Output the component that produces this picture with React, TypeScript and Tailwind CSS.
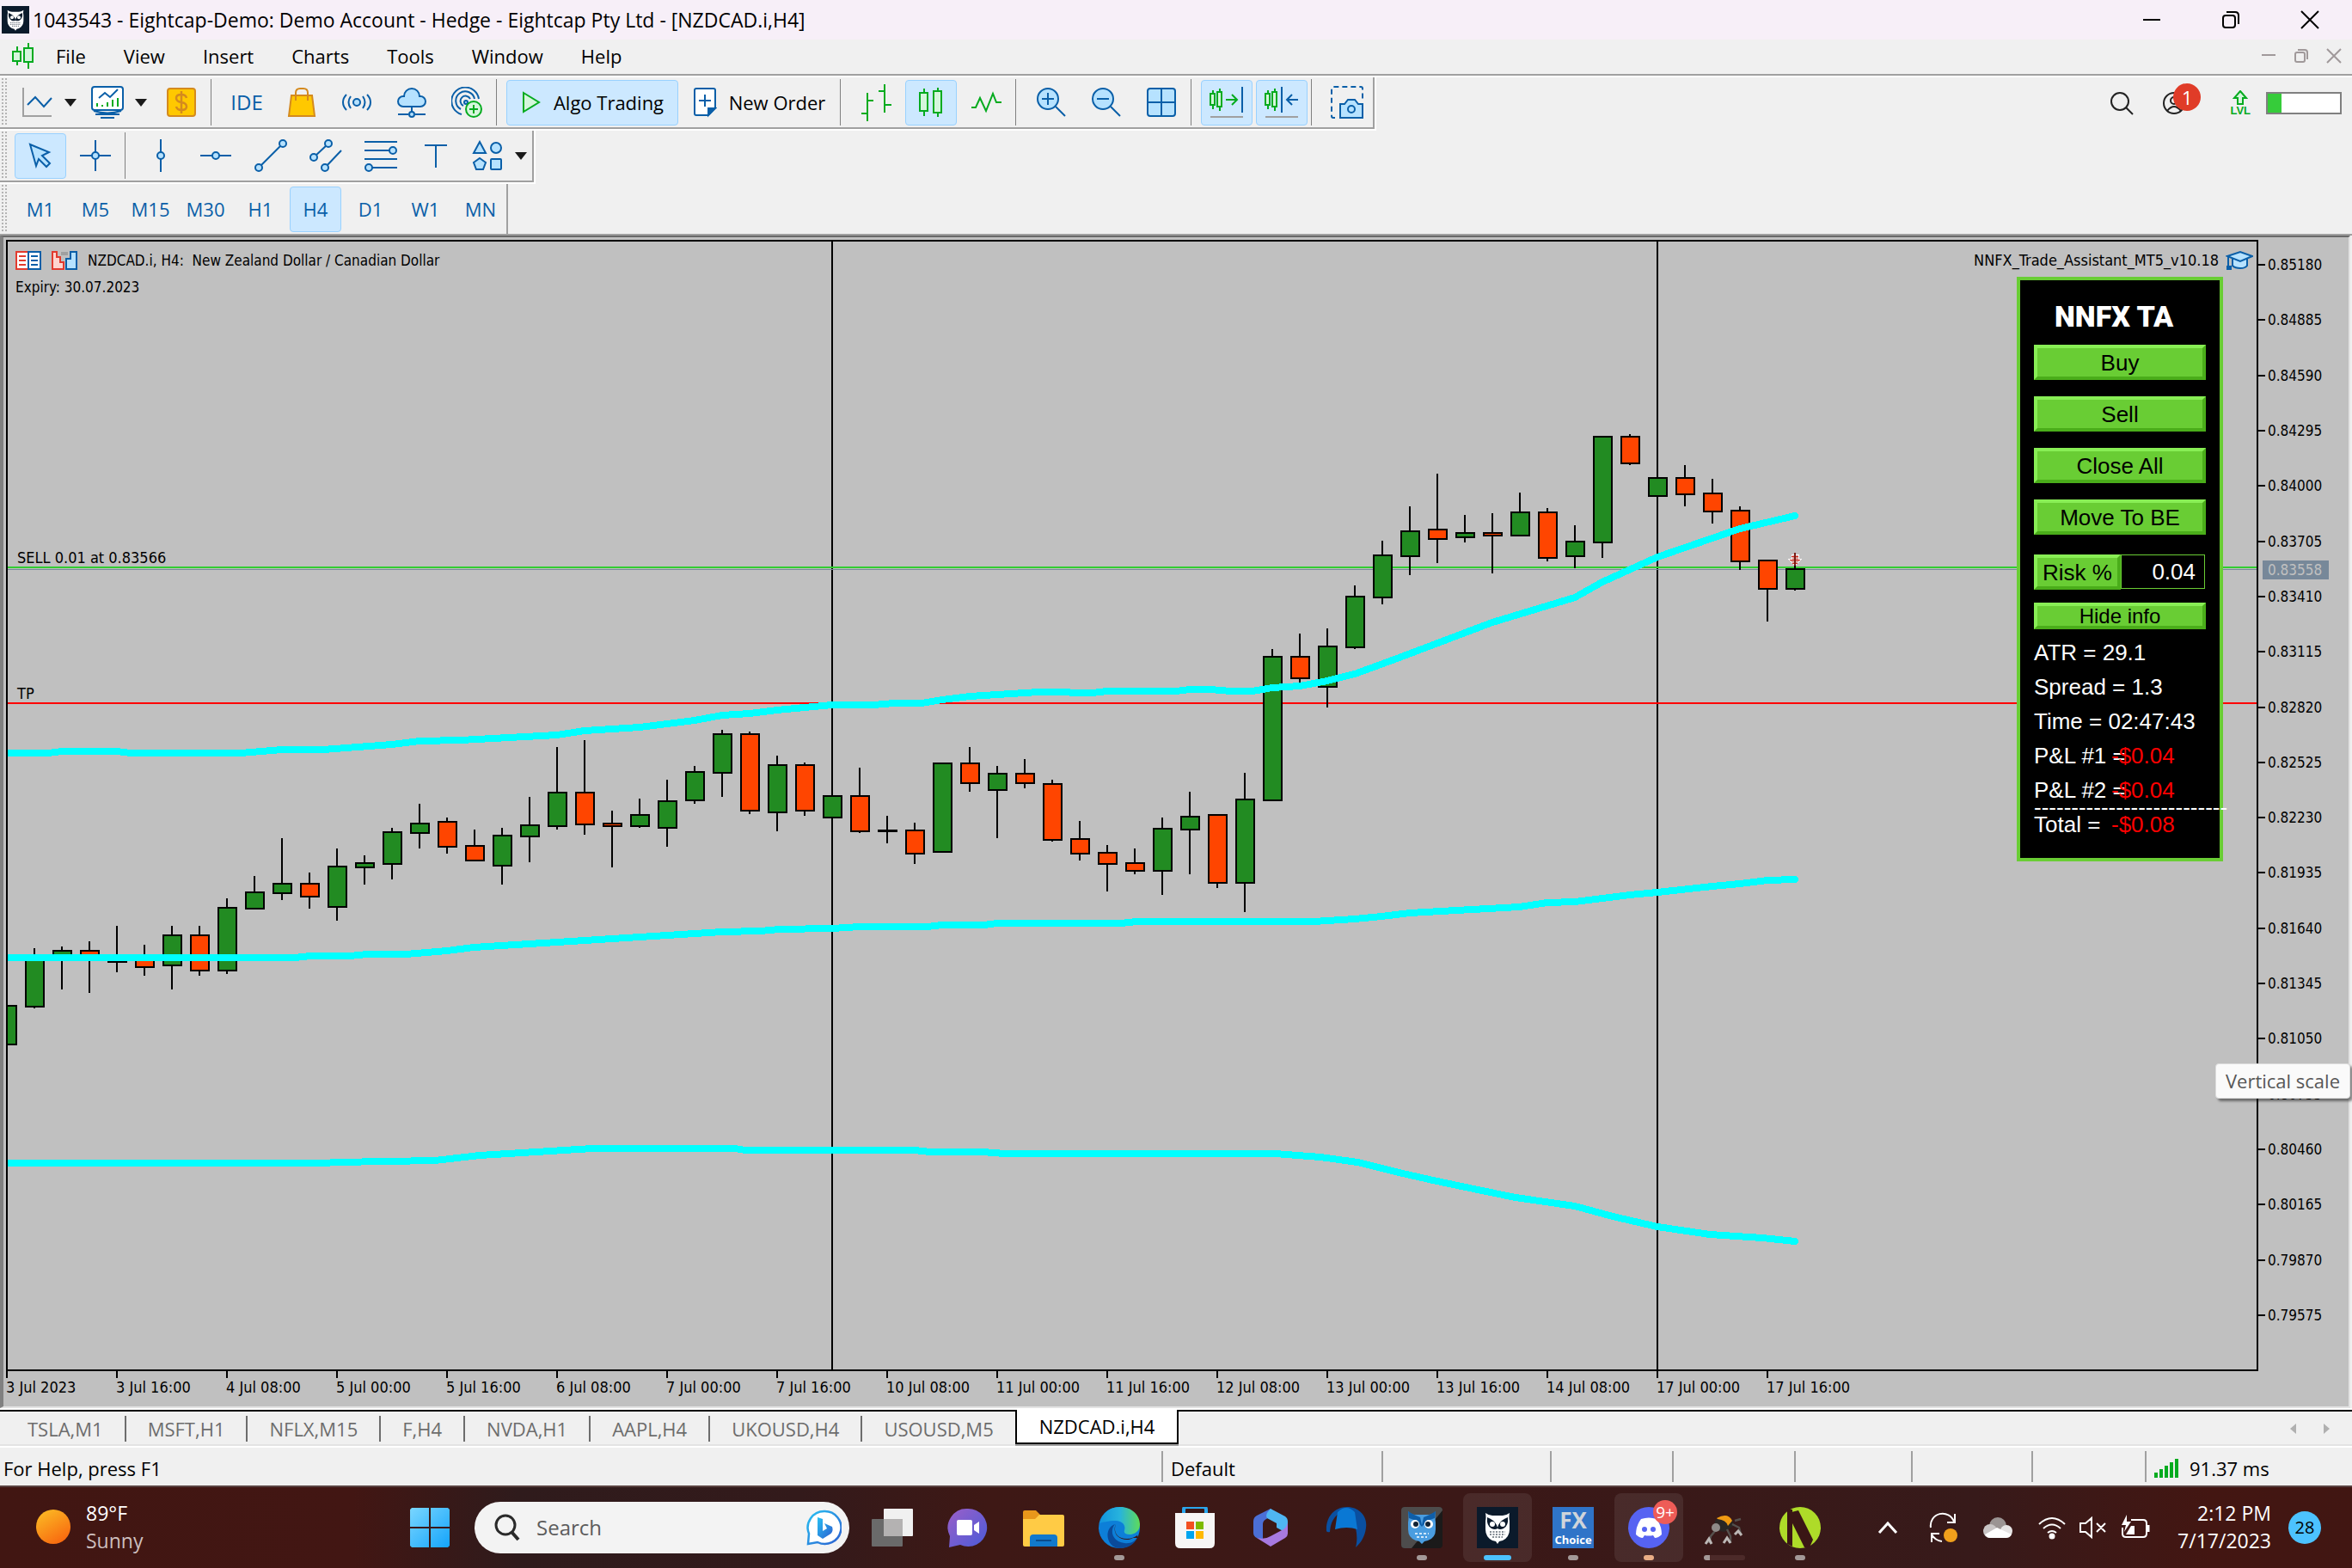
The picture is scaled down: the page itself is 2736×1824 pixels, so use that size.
import type { ReactNode } from 'react'
import { clsx } from 'clsx'

const BLUE = '#0a5fa8'
const SKY = '#b6e2ff'
const GREEN = '#05ab1f'
const MINT = '#d5f6dc'

/* ---------- chart data ---------- */

// [high, body top, body bottom, low, bullish]
type Candle = [number, number, number, number, 0 | 1]

const CANDLES: Candle[] = [
    [1169, 1169, 1216, 1216, 1], [1103, 1111, 1172, 1173, 1], [1101, 1105, 1115, 1151, 1],
    [1095, 1105, 1115, 1155, 0], [1077, 1114, 1120, 1131, 1], [1099, 1113, 1126, 1135, 0],
    [1077, 1087, 1124, 1151, 1], [1077, 1087, 1130, 1135, 0], [1045, 1055, 1130, 1133, 1],
    [1019, 1037, 1058, 1058, 1], [975, 1027, 1040, 1047, 1], [1015, 1027, 1044, 1057, 0],
    [987, 1007, 1056, 1071, 1], [995, 1003, 1010, 1029, 1], [963, 967, 1006, 1023, 1],
    [935, 957, 970, 987, 1], [951, 955, 986, 993, 0], [965, 983, 1002, 1002, 0],
    [963, 971, 1008, 1029, 1], [927, 959, 974, 1003, 1], [869, 921, 962, 965, 1],
    [861, 921, 960, 971, 0], [943, 957, 962, 1009, 0], [929, 947, 962, 963, 1],
    [907, 931, 964, 985, 1], [891, 897, 932, 935, 1], [849, 853, 900, 927, 1],
    [851, 853, 944, 947, 0], [879, 889, 946, 967, 1], [887, 889, 944, 949, 0],
    [925, 925, 952, 952, 1], [893, 925, 968, 969, 0], [949, 965, 968, 981, 1],
    [957, 965, 994, 1005, 0], [887, 887, 992, 992, 1], [869, 887, 912, 921, 0],
    [891, 899, 920, 975, 1], [883, 899, 912, 917, 0], [907, 911, 978, 979, 0],
    [955, 975, 994, 1001, 0], [983, 991, 1006, 1037, 0], [987, 1003, 1014, 1017, 0],
    [951, 963, 1014, 1041, 1], [921, 949, 966, 1017, 1], [947, 947, 1028, 1033, 0],
    [899, 929, 1028, 1061, 1], [755, 763, 932, 932, 1], [737, 763, 790, 797, 0],
    [731, 751, 800, 823, 1], [681, 693, 754, 755, 1], [629, 645, 696, 703, 1],
    [589, 617, 648, 669, 1], [551, 615, 628, 655, 0], [599, 619, 626, 631, 1],
    [597, 619, 624, 667, 0], [573, 595, 624, 624, 1], [591, 595, 650, 653, 0],
    [611, 629, 648, 661, 1], [507, 507, 632, 649, 1], [505, 507, 540, 541, 0],
    [555, 555, 578, 578, 1], [541, 555, 576, 589, 0], [557, 573, 596, 609, 0],
    [589, 593, 654, 663, 0], [651, 651, 686, 723, 0], [643, 661, 686, 687, 1],
]

const BANDS = [
    '8,876 56,876 72,874 136,874 152,876 280,876 328,872 376,872 456,866 488,862 536,861 648,855 680,850 744,846 808,838 840,832 872,830 904,826 968,820 1016,820 1040,818 1072,818 1096,814 1128,810 1192,806 1208,805 1239,805 1250,806 1271,806 1288,804 1368,804 1384,802 1408,802 1432,804 1457,804 1480,800 1512,798 1544,792 1576,784 1625,766 1736,724 1832,695 1864,677 1928,648 1960,637 2024,615 2088,600',
    '8,1114 343,1114 361,1112 407,1112 427,1110 472,1110 520,1106 551,1102 648,1096 744,1090 840,1084 885,1083 906,1081 968,1080 1000,1078 1079,1078 1096,1076 1145,1076 1160,1074 1304,1074 1322,1072 1528,1072 1576,1069 1607,1066 1640,1062 1767,1055 1800,1050 1832,1049 1896,1041 1928,1038 1992,1031 2024,1028 2056,1024 2088,1023',
    '8,1353 375,1353 393,1352 506,1350 558,1344 640,1339 689,1336 855,1336 867,1338 1064,1338 1082,1340 1143,1340 1169,1342 1483,1342 1536,1346 1579,1352 1623,1363 1667,1373 1719,1384 1763,1393 1832,1403 1876,1415 1928,1427 1989,1436 2050,1440 2088,1444',
]

const PRICES = Array.from({ length: 20 }, (_, i) => ((85180 - i * 295) / 100000).toFixed(5))

const TIMES = [
    '3 Jul 2023', '3 Jul 16:00', '4 Jul 08:00', '5 Jul 00:00', '5 Jul 16:00', '6 Jul 08:00',
    '7 Jul 00:00', '7 Jul 16:00', '10 Jul 08:00', '11 Jul 00:00', '11 Jul 16:00', '12 Jul 08:00',
    '13 Jul 00:00', '13 Jul 16:00', '14 Jul 08:00', '17 Jul 00:00', '17 Jul 16:00',
]

const MENUS = ['File', 'View', 'Insert', 'Charts', 'Tools', 'Window', 'Help']
const TIMEFRAMES = ['M1', 'M5', 'M15', 'M30', 'H1', 'H4', 'D1', 'W1', 'MN']
const TABS = ['TSLA,M1', 'MSFT,H1', 'NFLX,M15', 'F,H4', 'NVDA,H1', 'AAPL,H4', 'UKOUSD,H4', 'USOUSD,M5']

/* ---------- small building blocks ---------- */

type IconProps = { w?: number; h?: number; children: ReactNode; stroke?: string; fill?: string; sw?: number }

const Icon = ({ w = 36, h = 36, children, stroke = BLUE, fill = 'none', sw = 2 }: IconProps) => (
    <svg width={w} height={h} viewBox={`0 0 ${w} ${h}`} fill={fill} stroke={stroke} strokeWidth={sw} className="shrink-0" aria-hidden="true">
        {children}
    </svg>
)

const ToolButton = ({ label, active, children }: { label: string; active?: boolean; children: ReactNode }) => (
    <button
        aria-label={label}
        className={clsx(
            'flex h-[53px] w-[60px] shrink-0 items-center justify-center rounded-sm border text-[#0a5fa8]',
            active ? 'border-[#99d1ff] bg-[#cce8ff]' : 'border-transparent',
        )}
    >
        {children}
    </button>
)

const Drop = ({ label }: { label: string }) => (
    <button aria-label={label} className="-ml-1 flex h-[53px] w-[18px] shrink-0 items-center justify-center">
        <svg width="14" height="9" viewBox="0 0 14 9" fill="#1a1a1a" aria-hidden="true"><path d="M0 0h14L7 9z" /></svg>
    </button>
)

const Sep = () => <span className="mr-[7px] h-[54px] w-px shrink-0 bg-[#808080]" />

const Grip = () => (
    <svg width="7" height="56" className="ml-[2px] shrink-0" aria-hidden="true">
        {Array.from({ length: 14 }, (_, i) => (
            <path key={i} d={`M0 ${i * 4 + 1}h2M4 ${i * 4 + 1}h2`} stroke="#b4b4b4" strokeWidth="2" />
        ))}
    </svg>
)

/* ---------- title and menu ---------- */

const OwlHead = ({ size }: { size: number }) => (
    <svg width={size} height={size} viewBox="0 0 48 48" aria-hidden="true">
        <rect width="48" height="48" fill="#0b1a2b" />
        <path d="M10 7q4 3 8 3h12q4 0 8-3-1 5 0 9v10q0 9-8 13l-4 1-2 3-2-3-4-1q-8-4-8-13V16q1-4 0-9z" fill="#fff" />
        <path d="M12 12q8 3 11 9l1 3 1-3q3-6 11-9 1 10-5 13-4 2-7 0-3 2-7 0-6-3-5-13z" fill="#0b1a2b" />
        <circle cx="18" cy="20" r="3" fill="#fff" /><circle cx="30" cy="20" r="3" fill="#fff" />
        <path d="M15 29h18M15 32h18M18 35h12" stroke="#0b1a2b" strokeWidth="1" strokeDasharray="2 1.5" />
    </svg>
)

const TitleBar = () => (
    <header className="flex h-[46px] items-center bg-[#f7eff8] pr-[3px] pl-[2px]">
        <OwlHead size={32} />
        <h1 className="ml-1 text-[23px] leading-[32px] whitespace-nowrap">
            1043543 - Eightcap-Demo: Demo Account - Hedge - Eightcap Pty Ltd - [NZDCAD.i,H4]
        </h1>
        <div className="ml-auto flex h-full">
            <button aria-label="Minimize" className="flex w-[92px] items-center justify-center">
                <Icon w={22} h={22} stroke="#000"><path d="M1 11h20" /></Icon>
            </button>
            <button aria-label="Restore" className="flex w-[92px] items-center justify-center">
                <Icon w={22} h={22} stroke="#000"><rect x="2" y="6" width="14" height="14" rx="3" /><path d="M6 2h10q4 0 4 4v10" /></Icon>
            </button>
            <button aria-label="Close" className="flex w-[92px] items-center justify-center">
                <Icon w={22} h={22} stroke="#000"><path d="M1 1l20 20M21 1L1 21" /></Icon>
            </button>
        </div>
    </header>
)

const MenuBar = () => (
    <nav className="flex h-[44px] items-center border-b-2 border-white bg-[#f0f0f0] pr-[2px] pb-[4px] pl-[14px] shadow-[inset_0_-2px_0_#a0a0a0]">
        <Icon w={26} h={30} stroke={GREEN} fill={MINT}>
            <path d="M6 4v22M19 0v30" /><rect x="1" y="10" width="9" height="11" /><rect x="14" y="6" width="10" height="16" />
        </Icon>
        <div className="ml-[3px] flex">
            {MENUS.map(item => <button key={item} className="px-[22px] text-[22px] leading-[36px]">{item}</button>)}
        </div>
        <div className="ml-auto flex">
            <button aria-label="Minimize chart" className="flex w-[38px] justify-center">
                <Icon w={18} h={18} stroke="#a0999a"><path d="M1 8h16" /></Icon>
            </button>
            <button aria-label="Restore chart" className="flex w-[38px] justify-center">
                <Icon w={18} h={18} stroke="#a0999a"><rect x="2" y="5" width="11" height="11" rx="2" /><path d="M5 2h8q3 0 3 3v8" /></Icon>
            </button>
            <button aria-label="Close chart" className="flex w-[38px] justify-center">
                <Icon w={18} h={18} stroke="#a0999a"><path d="M1 1l16 16M17 1L1 17" /></Icon>
            </button>
        </div>
    </nav>
)

/* ---------- toolbars ---------- */

const Toolbar = ({ children }: { children: ReactNode }) => (
    <div className="flex w-max border-r-2 border-b-2 border-white">
        <div className="flex h-[60px] items-center gap-1 border-r-2 border-b-2 border-[#a0a0a0]">{children}</div>
    </div>
)

const MainToolbar = () => (
    <Toolbar>
        <Grip />
        <ToolButton label="New chart">
            <Icon><path d="M2 1v33h33" stroke="#a0a0a0" /><path d="M7 21l9-9 10 11 9-10" /></Icon>
        </ToolButton>
        <Drop label="Chart list" />
        <ToolButton label="Profiles">
            <Icon w={40} h={40}>
                <rect x="2" y="2" width="36" height="27" rx="3" fill="#fff" />
                <path d="M10 15l7-6 6 5 9-9" />
                <path d="M8 25v-4M14 25v-2M20 25v-5M26 25v-8M32 25v-10" stroke={GREEN} />
                <path d="M4 30q16 5 32 0M6 34h28M12 38h16" />
            </Icon>
        </ToolButton>
        <Drop label="Profile list" />
        <span />
        <ToolButton label="Market watch">
            <Icon stroke="#d48a1e">
                <rect x="2" y="2" width="32" height="32" rx="3" fill="#ffc800" />
                <path d="M24 13q-1-4-6-4-6 0-6 4t6 5q6 1 6 5t-6 4q-5 0-6-4M18 5v26" strokeWidth="2.5" />
            </Icon>
        </ToolButton>
        <Sep />
        <ToolButton label="IDE"><span className="text-[24px]">IDE</span></ToolButton>
        <ToolButton label="Market">
            <Icon stroke="#d48a1e">
                <path d="M6 10h24l3 24H3z" fill="#ffc800" /><path d="M11 16V7q0-5 5-5h4q5 0 5 5v9" />
            </Icon>
        </ToolButton>
        <ToolButton label="Signals">
            <Icon>
                <circle cx="18" cy="18" r="4" fill={SKY} />
                <path d="M11 11q-5 7 0 14M25 11q5 7 0 14M6 9q-4 4-4 9t4 9M30 9q4 4 4 9t-4 9" />
            </Icon>
        </ToolButton>
        <ToolButton label="VPS">
            <Icon h={38}>
                <path d="M8 24a6 6 0 0 1 0-12h1a9 9 0 0 1 18 0h1a6 6 0 0 1 0 12z" fill={SKY} />
                <path d="M18 24v7M2 33h12M22 33h12" /><circle cx="18" cy="33" r="3" fill={SKY} />
            </Icon>
        </ToolButton>
        <ToolButton label="Copy trading">
            <Icon>
                <path d="M12 32a16 16 0 1 1 20-18M11 26a11 11 0 1 1 16-12M14 22a6 6 0 1 1 8-8" />
                <circle cx="17" cy="18" r="2" fill={SKY} />
                <circle cx="26" cy="26" r="9" stroke={GREEN} fill={MINT} /><path d="M26 21v10M21 26h10" stroke={GREEN} />
            </Icon>
        </ToolButton>
        <Sep />
        <button className="flex h-[53px] w-[200px] items-center justify-center gap-[14px] rounded-sm border border-[#99d1ff] bg-[#cce8ff] text-[22px] whitespace-nowrap">
            <Icon w={24} h={26} stroke={GREEN} fill={MINT}><path d="M3 2l18 11L3 24z" /></Icon>
            Algo Trading
        </button>
        <button className="flex h-[53px] w-[180px] items-center justify-center gap-[14px] text-[22px] whitespace-nowrap">
            <Icon w={28} h={36}>
                <path d="M4 2h20q2 0 2 2v20l-8 9H4q-2 0-2-2V4q0-2 2-2z" fill="#fff" />
                <path d="M14 9v14M7 16h14" /><path d="M26 25l-8 8v-8z" fill={BLUE} />
            </Icon>
            New Order
        </button>
        <Sep />
        <ToolButton label="Bar chart">
            <Icon h={44} stroke={GREEN}><path d="M8 11v33M1 35h7M8 20h7M28 1v33M21 9h7M28 25h8" /></Icon>
        </ToolButton>
        <ToolButton label="Candlestick chart" active>
            <Icon w={28} h={34} stroke={GREEN} fill={MINT}>
                <path d="M6 1v32M22 0v34" /><rect x="1" y="6" width="9" height="21" /><rect x="17" y="4" width="9" height="25" />
            </Icon>
        </ToolButton>
        <ToolButton label="Line chart">
            <Icon stroke={GREEN}><path d="M1 24h5l5-11 7 15 8-20 4 10h6" /></Icon>
        </ToolButton>
        <Sep />
        <ToolButton label="Zoom in">
            <Icon><circle cx="14" cy="14" r="12" fill={SKY} /><path d="M7 14h14M14 7v14M23 23l11 11" /></Icon>
        </ToolButton>
        <ToolButton label="Zoom out">
            <Icon><circle cx="14" cy="14" r="12" fill={SKY} /><path d="M7 14h14M23 23l11 11" /></Icon>
        </ToolButton>
        <ToolButton label="Tile windows">
            <Icon><rect x="2" y="2" width="32" height="32" rx="3" fill={SKY} /><path d="M18 2v32M2 18h32" /></Icon>
        </ToolButton>
        <Sep />
        <ToolButton label="Auto scroll" active>
            <Icon w={40} h={36} stroke={GREEN} fill={MINT}>
                <path d="M4 4v22M12 2v26" /><rect x="1" y="8" width="5" height="13" /><rect x="9" y="6" width="5" height="17" />
                <path d="M19 15h12M26 9l6 6-6 6" fill="none" /><path d="M38 0v30" stroke={BLUE} /><path d="M1 35h38" stroke="#a0a0a0" />
            </Icon>
        </ToolButton>
        <ToolButton label="Chart shift" active>
            <Icon w={40} h={36} stroke={GREEN} fill={MINT}>
                <path d="M4 4v22M12 2v26" /><rect x="1" y="8" width="5" height="13" /><rect x="9" y="6" width="5" height="17" />
                <path d="M20 0v30M39 15H26M32 9l-6 6 6 6" stroke={BLUE} fill="none" /><path d="M1 35h38" stroke="#a0a0a0" />
            </Icon>
        </ToolButton>
        <Sep />
        <ToolButton label="Screenshot">
            <Icon w={40} h={40}>
                <path d="M6 38H4q-2 0-2-2V4q0-2 2-2h32q2 0 2 2v12" strokeDasharray="6 4" />
                <path d="M12 22h5l4-5h8l4 5h5v16H12z" fill={SKY} /><circle cx="25" cy="28" r="4" />
            </Icon>
        </ToolButton>
    </Toolbar>
)

const DrawToolbar = () => (
    <Toolbar>
        <Grip />
        <span />
        <ToolButton label="Cursor" active>
            <Icon w={30} h={30}><path d="M3 2l22 9-8 4 9 9-4 4-9-9-3 8z" fill={SKY} /></Icon>
        </ToolButton>
        <ToolButton label="Crosshair">
            <Icon><path d="M18 0v36M0 18h36" /><circle cx="18" cy="18" r="4" fill={SKY} /></Icon>
        </ToolButton>
        <Sep />
        <ToolButton label="Vertical line">
            <Icon h={38}><path d="M18 0v38" /><circle cx="18" cy="19" r="4" fill={SKY} /></Icon>
        </ToolButton>
        <ToolButton label="Horizontal line">
            <Icon><path d="M0 18h36" /><circle cx="18" cy="18" r="4" fill={SKY} /></Icon>
        </ToolButton>
        <ToolButton label="Trend line">
            <Icon w={40} h={40}><path d="M6 34L34 6" /><circle cx="6" cy="34" r="4" fill={SKY} /><circle cx="34" cy="6" r="4" fill={SKY} /></Icon>
        </ToolButton>
        <ToolButton label="Channel">
            <Icon w={40} h={40}>
                <path d="M6 22L23 6M19 34l19-20" />
                <circle cx="6" cy="22" r="4" fill={SKY} /><circle cx="23" cy="6" r="4" fill={SKY} /><circle cx="19" cy="34" r="4" fill={SKY} />
            </Icon>
        </ToolButton>
        <ToolButton label="Fibonacci">
            <Icon w={40} h={40}>
                <path d="M1 4h38M1 14h30M1 24h38M9 34h30" /><circle cx="34" cy="14" r="4" fill={SKY} /><circle cx="6" cy="34" r="4" fill={SKY} />
            </Icon>
        </ToolButton>
        <ToolButton label="Text">
            <Icon w={28} h={28}><path d="M1 2h26M14 2v26" /></Icon>
        </ToolButton>
        <div className="-ml-1 flex gap-1">
            <ToolButton label="Objects">
                <Icon fill={SKY}>
                    <path d="M9 2l7 13H2z" /><circle cx="28" cy="9" r="6" /><path d="M9 21l7 5-3 8H5l-3-8z" /><rect x="22" y="22" width="12" height="12" rx="1" />
                </Icon>
            </ToolButton>
            <Drop label="More objects" />
        </div>
        <span />
    </Toolbar>
)

const TimeframeBar = () => (
    <div className="flex h-[58px] w-max items-center gap-1 border-r-2 border-[#a0a0a0]">
        <Grip />
        <span />
        {TIMEFRAMES.map(tf => (
            <ToolButton key={tf} label={tf} active={tf === 'H4'}><span className="text-[22px]">{tf}</span></ToolButton>
        ))}
    </div>
)

const StatusCorner = () => (
    <div className="flex h-[60px] items-center pr-[12px]">
        <button aria-label="Search" className="mr-[34px]">
            <Icon w={28} h={28} stroke="#222"><circle cx="12" cy="12" r="10" /><path d="M19 19l8 8" /></Icon>
        </button>
        <button aria-label="Account, 1 notification" className="relative mr-[52px]">
            <Icon w={26} h={28} stroke="#222"><circle cx="13" cy="14" r="12" /><circle cx="13" cy="11" r="4" /><path d="M5 23q8-10 16 0" /></Icon>
            <span className="absolute -top-[9px] left-[12px] flex h-8 w-8 items-center justify-center rounded-full bg-[#e03c28] text-[22px] leading-none text-white">1</span>
        </button>
        <div className="mr-[18px] flex flex-col items-center">
            <Icon w={18} h={17} stroke={GREEN} fill={MINT} sw={2}><path d="M9 1l7 8h-4v7H6V9H2z" /></Icon>
            <span className="font-['Liberation_Sans'] text-[13px] leading-[14px] font-bold text-[#05ab1f]">LVL</span>
        </div>
        <div className="h-[26px] w-[88px] border-2 border-[#808080] bg-white"><div className="h-full w-[16px] bg-[#36cc3a]" /></div>
    </div>
)

/* ---------- chart ---------- */

const Plot = () => (
    <svg viewBox="9 281 2616 1312" preserveAspectRatio="none" shapeRendering="crispEdges" className="absolute inset-0 h-full w-full" role="img" aria-label="NZDCAD four hour candles">
        <path d="M968 281v1312M1928 281v1312" stroke="#000" strokeWidth="2" />
        <path d="M9 660h2616" stroke="#32cd32" strokeWidth="2" />
        <path d="M9 662.5h2616" stroke="#778899" strokeWidth="1" />
        <path d="M9 818h2616" stroke="#f00" strokeWidth="2" />
        {CANDLES.map(([high, top, bottom, low, up], i) => {
            const x = 8 + i * 32
            return (
                <g key={i} stroke="#000" strokeWidth="2">
                    <path d={`M${x} ${high}V${low}`} />
                    <rect x={x - 10} y={top + 1} width="21" height={bottom - top - 2} fill={up ? '#228b22' : '#ff4500'} />
                </g>
            )
        })}
        {BANDS.map(points => (
            <polyline key={points} points={points} fill="none" stroke="#0ff" strokeWidth="8" strokeLinecap="round" strokeLinejoin="round" />
        ))}
        <path d="M2084 645h8v5h4l-8 8-8-8h4z" fill="#d8a09a" stroke="#fff" strokeWidth="1" />
        <path d="M2084 647h8M2082 651h12M2085 655h6" stroke="#d4281c" strokeWidth="1" />
        <path d="M2088 643v15" stroke="#7a1a14" strokeWidth="2" />
    </svg>
)

const BEVEL = 'border-4 border-t-[#88ee55] border-l-[#88ee55] border-r-[#4aad1a] border-b-[#4aad1a] bg-[#69cd34] text-black leading-none'

const TradePanel = () => (
    <section className="absolute top-[41px] right-[39px] w-[240px] border-4 border-[#69cd34] bg-black px-4 pt-[9px] pb-[19px] font-['Liberation_Sans'] text-[26px] text-white">
        <h2 className="h-[66px] pr-[14px] text-center font-[Impact,'Roboto'] text-[34px] leading-[66px] font-black whitespace-nowrap">NNFX TA</h2>
        <div className="flex flex-col gap-[19px]">
            {['Buy', 'Sell', 'Close All', 'Move To BE'].map(action => (
                <button key={action} className={clsx(BEVEL, 'h-[41px]')}>{action}</button>
            ))}
        </div>
        <div className="mt-[23px] flex">
            <label htmlFor="risk" className={clsx(BEVEL, 'flex h-[41px] w-[101px] items-center justify-center whitespace-nowrap')}>Risk %</label>
            <input id="risk" defaultValue="0.04" className="h-[40px] w-[98px] border border-[#69cd34] bg-black pr-[10px] text-right" />
        </div>
        <button className={clsx(BEVEL, 'mt-[15px] block h-[31px] w-full text-[24px]')}>Hide info</button>
        <div className="mt-[7px] leading-[40px] whitespace-nowrap">
            <p>ATR = 29.1</p>
            <p>Spread = 1.3</p>
            <p>Time = 02:47:43</p>
            <p className="flex"><span className="w-[90px]">P&amp;L #1 =</span><span className="text-[#f00]">-$0.04</span></p>
            <p className="flex"><span className="w-[90px]">P&amp;L #2 =</span><span className="text-[#f00]">-$0.04</span></p>
            <p className="h-0 leading-[0px]">--------------------------</p>
            <p className="flex"><span className="w-[90px]">Total =</span><span className="text-[#f00]">-$0.08</span></p>
        </div>
    </section>
)

const ChartWindow = () => (
    <main className="relative mr-[2px] grid flex-1 grid-cols-[1fr_105px] grid-rows-[1fr_41px] border-t-2 border-r-2 border-b-2 border-l-4 border-t-[#696969] border-r-[#e3e3e3] border-b-[#e3e3e3] border-l-[#808080] bg-[#c0c0c0] pt-[3px] pl-[3px] font-['DejaVu_Sans_Condensed','Noto_Sans'] text-[18px] leading-[22px]">
        <div className="relative border-2 border-black">
            <Plot />
            <div className="relative flex items-center pt-[10px] pr-[4px] pl-[9px]">
                <Icon w={30} h={22} stroke="#e23b2e">
                    <path d="M15 1H1v20h14" fill="#fff" /><path d="M15 1h14v20H15z" stroke={BLUE} fill="#fff" />
                    <path d="M4 6h8M4 11h8M4 16h8" /><path d="M18 6h8M18 11h8M18 16h8" stroke={BLUE} />
                </Icon>
                <span className="ml-3">
                    <Icon w={30} h={22} stroke="#e23b2e" fill="#ffd5cf">
                        <path d="M1 1h5v6h4v6h4v8H1z" /><path d="M17 21V9h5V1h7v20z" stroke={BLUE} fill={SKY} /><path d="M11 3h8" stroke="#a0a0a0" strokeWidth="4" />
                    </Icon>
                </span>
                <h2 className="ml-3 text-[17px] whitespace-pre">NZDCAD.i, H4:  New Zealand Dollar / Canadian Dollar</h2>
                <span className="mr-2 ml-auto">NNFX_Trade_Assistant_MT5_v10.18</span>
                <Icon w={32} h={24}>
                    <path d="M8 9v9q3 3 9 3t8-3V9" fill={SKY} /><path d="M2 7l15-5 14 5-14 6z" fill={SKY} /><path d="M3 8v11" /><path d="M2 19h4v3H2z" fill={BLUE} />
                </Icon>
            </div>
            <p className="relative mt-[8px] pl-[9px] text-[17px]">Expiry: 30.07.2023</p>
            <p className="absolute top-[357px] left-[11px]">SELL 0.01 at 0.83566</p>
            <p className="absolute top-[515px] left-[11px]">TP</p>
            <TradePanel />
        </div>

        {/* Price scale */}
        <div className="relative flex flex-col justify-between pt-[18px] pb-[54px] text-[17px]">
            {PRICES.map(price => (
                <div key={price} className="flex h-[22px] items-center gap-[3px]"><span className="h-[2px] w-2 bg-black" />{price}</div>
            ))}
            <span className="absolute top-[373px] left-[5px] w-[77px] bg-[#778899] pl-[6px] text-[#c0c0c0]">0.83558</span>
        </div>

        {/* Time scale */}
        <div className="flex overflow-hidden">
            {TIMES.map(time => (
                <div key={time} className="w-[128px] shrink-0 whitespace-nowrap"><span className="block h-2 w-[2px] bg-black" />{time}</div>
            ))}
        </div>

        <div role="tooltip" className="absolute top-[961px] -right-[2px] h-[41px] rounded border border-[#dcdcdc] bg-[#fafafa] px-[11px] font-['Open_Sans'] text-[22px] leading-[38px] text-[#575757] shadow-[3px_3px_3px_rgba(0,0,0,0.45)]">
            Vertical scale
        </div>
    </main>
)

/* ---------- tabs and status ---------- */

const ChartTabs = () => (
    <div className="flex h-[42px] items-stretch border-t-2 border-black bg-[#f0f0f0] pl-[7px] text-[22px] shadow-[inset_0_-2px_0_#e3e3e3]">
        {TABS.map((tab, i) => (
            <button key={tab} className="flex items-center text-[#6d6d6d]">
                <span className="px-[25px]">{tab}</span>
                {i < TABS.length - 1 && <span className="h-[30px] w-[2px] bg-[#6d6d6d]" />}
            </button>
        ))}
        <button className="-mt-[2px] mb-[2px] border-x-2 border-b-2 border-black bg-white px-[26px] leading-[36px] shadow-[0_2px_0_#a0a0a0]">NZDCAD.i,H4</button>
        <div className="ml-auto flex items-center gap-[32px] pr-[26px]">
            <button aria-label="Scroll tabs left"><svg width="7" height="12" viewBox="0 0 7 12" fill="#b0b0b0" aria-hidden="true"><path d="M7 0v12L0 6z" /></svg></button>
            <button aria-label="Scroll tabs right"><svg width="7" height="12" viewBox="0 0 7 12" fill="#b0b0b0" aria-hidden="true"><path d="M0 0v12l7-6z" /></svg></button>
        </div>
    </div>
)

const Cell = ({ className, children }: { className: string; children?: ReactNode }) => (
    <div className={clsx('flex h-[36px] shrink-0 items-center border-l-2 border-[#a0a0a0]', className)}>{children}</div>
)

const StatusBar = () => (
    <footer className="flex h-[46px] items-center border-t-2 border-white bg-[#f0f0f0] text-[22px] leading-none">
        <span className="flex-1 pt-[3px] pl-1">For Help, press F1</span>
        <Cell className="w-[256px] pt-[3px] pl-[9px]">Default</Cell>
        <Cell className="w-[196px]" />
        <Cell className="w-[142px]" />
        <Cell className="w-[142px]" />
        <Cell className="w-[136px]" />
        <Cell className="w-[140px]" />
        <Cell className="w-[132px]" />
        <Cell className="w-[241px] gap-[11px] pt-[3px] pl-[9px]">
            <Icon w={30} h={22} stroke={GREEN} sw={4}><path d="M2 22v-6M8 22V12M14 22V8M20 22V4M26 22V0" /></Icon>
            91.37 ms
        </Cell>
    </footer>
)

/* ---------- taskbar ---------- */

type AppItem = { name: string; icon: ReactNode; mark?: 'dot' | 'active' | 'alert' | 'wide' }

const svgProps = { width: 48, height: 48, viewBox: '0 0 48 48', 'aria-hidden': true } as const

const APPS: AppItem[] = [
    { name: 'Task view', icon: <svg {...svgProps}><rect x="14" y="2" width="34" height="32" rx="1" fill="#f0f0f0" /><rect y="14" width="36" height="32" rx="1" fill="#6a6a6a" /><path d="M14 14h22v20H14z" fill="#b4b2b2" /></svg> },
    { name: 'Chat', icon: <svg {...svgProps}><path d="M24 2a22 22 0 1 1-9 42L2 47l1-13A22 22 0 0 1 24 2z" fill="url(#chat)" /><rect x="11" y="15" width="18" height="18" rx="2" fill="#fff" /><path d="M31 21l6-4v14l-6-4z" fill="#fff" /></svg> },
    { name: 'File Explorer', icon: <svg {...svgProps}><path d="M0 6q0-2 2-2h13l5 5v6H0z" fill="#e8971b" /><path d="M0 14h14l5-5h27q2 0 2 2v33q0 2-2 2H2q-2 0-2-2z" fill="#ffcb45" /><path d="M8 46V36q0-4 4-4h24q4 0 4 4v10z" fill="#1179cc" /><path d="M15 39h18" stroke="#0a4c8c" strokeWidth="2" /></svg> },
    { name: 'Edge', mark: 'dot', icon: <svg {...svgProps}><circle cx="24" cy="24" r="24" fill="#0d7fd8" /><path d="M1 19C4 7 13 0 25 0c14 0 23 10 23 20 0 8-6 12-12 12-5 0-7-2-6-5 2-6-3-11-10-11C11 16 4 18 1 19z" fill="url(#edge)" /><path d="M19 20c-6 7-4 20 11 22 7 1 12-2 15-6-4 8-11 12-20 12C9 48 5 25 19 20z" fill="#0a4a9a" /><path d="M20 20c-3 8 0 17 13 17 5 0 9-2 12-4l1 3-6 0c-4 3-13 3-18-2-4-4-4-10-2-14z" fill="#3a1615" /></svg> },
    { name: 'Store', icon: <svg {...svgProps}><path d="M11 10V3q0-3 3-3h20q3 0 3 3v7" fill="none" stroke="#2aa7ee" strokeWidth="4" /><path d="M1 7h46v35q0 6-6 6H7q-6 0-6-6z" fill="#f7f5f5" /><path d="M14 17h9v9h-9z" fill="#f25022" /><path d="M25 17h9v9h-9z" fill="#7fba00" /><path d="M14 28h9v9h-9z" fill="#00a4ef" /><path d="M25 28h9v9h-9z" fill="#ffb900" /></svg> },
    { name: 'Microsoft 365', icon: <svg {...svgProps}><path d="M24 2L8 10q-4 2-4 7v13q0 4 4 6l7 3V20q0-4 4-6l10-6z" fill="#4b6fd6" /><path d="M24 2l17 9q3 2 3 6v14L31 24v-5L20 13q-3-4 4-11z" fill="#4fb6f2" /><path d="M44 18v13q0 3-3 5L24 46 8 36q10 2 16-2l15-8q4-3 5-8z" fill="#a779e0" /></svg> },
    { name: 'Wire', icon: <svg {...svgProps}><path d="M1 28C0 12 10 0 25 0c14 0 24 11 22 24-1 10-6 18-12 23 4-14-1-36-12-43C12 8 6 15 5 29q-3 1-4-1z" fill="#0a4fa0" /><path d="M14 6q10-10 20 0l3 20q-12-4-26 0z" fill="#0a78d4" /></svg> },
    { name: 'Blue Owl', mark: 'dot', icon: <svg {...svgProps}><rect width="48" height="48" rx="4" fill="#1b1a1a" /><path d="M0 4q0-4 4-4h40q4 0 4 4L12 48H4q-4 0-4-4z" fill="#4d4c4c" /><path d="M8 5q4 4 8 4h16q4 0 8-4-1 7 0 13v8q0 10-9 13l-4 1-3 3-3-3-4-1q-9-3-9-13v-8q1-6 0-13z" fill="#4a9de0" /><path d="M8 5q8 5 14 7l2 9 2-9q6-2 14-7l-1 8q-9 2-15 10Q18 15 9 13z" fill="#0f5ea8" /><circle cx="16" cy="20" r="5" fill="#fff" /><circle cx="32" cy="20" r="5" fill="#fff" /><circle cx="17" cy="20" r="3" fill="#123" /><circle cx="31" cy="20" r="3" fill="#123" /><path d="M16 31h16M18 35h12" stroke="#cfe7fa" strokeWidth="2" strokeDasharray="3 2" /></svg> },
    { name: 'MetaTrader', mark: 'active', icon: <OwlHead size={48} /> },
    { name: 'FX Choice', mark: 'dot', icon: <span className="flex h-12 w-12 flex-col items-center bg-[#2f74c8] font-['Open_Sans'] font-bold"><span className="text-[26px] leading-[31px] text-[#cfd4da]">FX</span><span className="text-[13px] leading-[14px] text-white">Choice</span></span> },
    { name: 'Discord', mark: 'alert', icon: <svg {...svgProps}><circle cx="24" cy="24" r="24" fill="#5663f2" /><path d="M15 14q9-3 18 0 6 8 6 18-4 4-8 4l-2-3q-5 1-10 0l-2 3q-4 0-8-4 0-10 6-18z" fill="#fff" /><circle cx="19" cy="26" r="3" fill="#5663f2" /><circle cx="29" cy="26" r="3" fill="#5663f2" /></svg> },
    { name: 'Strategy Quant', mark: 'wide', icon: <svg {...svgProps}><path d="M13 16q8-8 19-2l4 7-12 8-12-2z" fill="#2a2624" /><path d="M15 13q13-7 18 3l-5 6q-2-7-12-8z" fill="#f09a12" /><path d="M33 20l8 4 2 8M27 26l4 8v8M13 28l-5 6-2 8M36 16l7-2" fill="none" stroke="#55504d" strokeWidth="2.5" /><circle cx="14" cy="24" r="5" fill="#8e8a88" /><path d="M2 43l4-6 3 6M23 42l4-6 4 6M36 32l4-4 4 5" fill="none" stroke="#bcb8b6" strokeWidth="3" /></svg> },
    { name: 'NinjaTrader', mark: 'dot', icon: <svg {...svgProps}><circle cx="24" cy="24" r="24" fill="#aedb29" /><path d="M9 3l6 0v43l-6-3zM14 6l8-2 17 34-4 9-6 0L15 19z" fill="#3a1615" /></svg> },
]

const Mark = ({ kind }: { kind?: AppItem['mark'] }) => (
    <span
        className={clsx(
            'absolute bottom-[2px] h-[6px] rounded-full',
            !kind && 'hidden',
            kind === 'dot' && 'w-3 bg-[#a39998]',
            kind === 'active' && 'w-8 bg-[#4cc2ff]',
            kind === 'alert' && 'w-3 bg-[#e8ad85]',
            kind === 'wide' && 'w-12 bg-gradient-to-r from-[#a39998] from-15% to-[#4c2a29] to-15%',
        )}
    />
)

const Taskbar = () => (
    <footer className="flex h-[96px] items-center border-t-2 border-[#5a4241] bg-[linear-gradient(90deg,#411612_0%,#421613_15%,#2f1b1c_22%,#331a1b_34%,#3e1815_42%,#3b1817_62%,#371a1a_84%,#431612_94%,#411612_100%)] text-[23px] leading-[32px] text-white">
        <svg width="0" height="0" className="absolute" aria-hidden="true">
            <linearGradient id="chat" x2="1" y2="1"><stop stopColor="#9b5fc8" /><stop offset="1" stopColor="#4a5bd8" /></linearGradient>
            <linearGradient id="edge"><stop stopColor="#1293dd" /><stop offset=".5" stopColor="#27b3dd" /><stop offset="1" stopColor="#5edb5a" /></linearGradient>
            <linearGradient id="sun" x1=".2" x2=".8" y2="1"><stop stopColor="#fbb924" /><stop offset="1" stopColor="#f8640e" /></linearGradient>
            <linearGradient id="win" x2="1" y2="1"><stop stopColor="#7ad6ff" /><stop offset="1" stopColor="#14a4fb" /></linearGradient>
            <linearGradient id="bing" x2="1" y2="1"><stop stopColor="#29c0f2" /><stop offset="1" stopColor="#2b5fd0" /></linearGradient>
        </svg>
        <button className="flex w-[460px] items-center gap-[18px] pb-[3px] pl-[42px] text-left">
            <svg width="40" height="40" aria-hidden="true"><circle cx="20" cy="20" r="20" fill="url(#sun)" /></svg>
            <span>89°F<br /><span className="text-[#cdbfbe]">Sunny</span></span>
        </button>
        <button aria-label="Start" className="flex w-[80px] justify-center">
            <svg width="46" height="46" viewBox="0 0 46 46" fill="url(#win)" aria-hidden="true"><path d="M2 0h20v22H0V2zM24 0h20l2 2v20H24zM0 24h22v22H2l-2-2zM24 24h22v20l-2 2H24z" /></svg>
        </button>
        <label className="mr-[10px] ml-3 flex h-[60px] w-[436px] items-center rounded-full bg-[#f3f3f3] pr-[9px] pl-[21px]">
            <Icon w={32} h={32} stroke="#2a2a2a" sw={3}><circle cx="15" cy="13" r="11" /><path d="M22 21l8 9" strokeWidth="4" /></Icon>
            <input type="search" aria-label="Search" placeholder="Search" className="ml-[19px] min-w-0 flex-1 text-[24px] text-black placeholder:text-[#5c5c5c]" />
            <svg width="42" height="42" viewBox="0 0 42 42" aria-hidden="true">
                <path d="M22 2a19 19 0 1 1-8 36l-11 2 1-12A19 19 0 0 1 22 2z" fill="#fff" stroke="url(#bing)" strokeWidth="2.5" />
                <path d="M14 9l6 2v14l5-3-3-6 9 4q2 6-3 9l-8 5-6-4z" fill="url(#bing)" />
            </svg>
        </label>
        <div className="flex gap-2">
            {APPS.map(({ name, icon, mark }) => (
                <button
                    key={name}
                    aria-label={name}
                    className={clsx(
                        'relative flex h-20 w-20 items-center justify-center rounded-lg',
                        (mark === 'active' || mark === 'alert') && 'bg-white/8',
                    )}
                >
                    {icon}
                    <Mark kind={mark} />
                    {mark === 'alert' && <span className="absolute top-2 right-[7px] flex h-7 w-7 items-center justify-center rounded-full bg-[#ee5c57] text-[19px] leading-none">9+</span>}
                </button>
            ))}
        </div>
        <div className="ml-auto flex items-center pr-[36px]">
            <button aria-label="Hidden icons" className="mr-[36px]"><Icon w={24} h={16} stroke="#fff" sw={3}><path d="M2 14L12 3l10 11" /></Icon></button>
            <Icon w={34} h={36} stroke="#fff"><path d="M2 18A14 14 0 0 1 29 11M30 2v10h-9M3 35V25h9M3 26q4 7 12 8" /><circle cx="25" cy="27" r="8" fill="#f0a01c" stroke="none" /></Icon>
            <span className="ml-[29px]">
                <Icon w={34} h={24} stroke="none"><circle cx="17" cy="10" r="10" fill="#9b9493" /><circle cx="8" cy="16" r="8" fill="#c9c5c5" /><circle cx="27" cy="16" r="7" fill="#e6e4e4" /><path d="M2 20l14-8 17 8q-2 4-6 4H8q-4 0-6-4z" fill="#fff" /></Icon>
            </span>
            <button aria-label="Network, volume and battery" className="ml-[30px] flex items-center gap-4">
                <Icon w={32} h={28} stroke="#fff"><path d="M1 10q15-14 30 0M6 15q10-9 20 0M11 20q5-4 10 0" /><circle cx="16" cy="24" r="2.5" fill="#fff" /></Icon>
                <Icon w={32} h={28} stroke="#fff"><path d="M1 9h6l7-6v22l-7-6H1zM20 9l10 10M30 9L20 19" /></Icon>
                <Icon w={34} h={30} stroke="#fff"><path d="M12 6h14q4 0 4 4v12q0 4-4 4H6q-4 0-4-4v-7" /><path d="M32 12v8" strokeWidth="3" /><path d="M7 0L1 12h5l-2 8 8-12H7z" fill="#fff" stroke="none" /><path d="M12 13h4v10H6z" fill="#fff" stroke="none" /></Icon>
            </button>
            <button className="ml-[32px] pb-[3px] text-right">2:12 PM<br />7/17/2023</button>
            <span className="ml-5 flex h-[38px] w-[38px] items-center justify-center rounded-full bg-[#4cc2ff] text-[20px] leading-none text-black">28</span>
        </div>
    </footer>
)

const App = () => (
    <div className="flex min-h-screen flex-col bg-[#f0f0f0] font-['Open_Sans','Noto_Sans',sans-serif] text-black">
        <TitleBar />
        <MenuBar />
        <div className="flex items-start justify-between">
            <MainToolbar />
            <StatusCorner />
        </div>
        <DrawToolbar />
        <TimeframeBar />
        <div className="h-[2px] bg-[#a0a0a0]" />
        <ChartWindow />
        <div className="h-[2px] bg-white" />
        <ChartTabs />
        <StatusBar />
        <Taskbar />
    </div>
)

export default App
